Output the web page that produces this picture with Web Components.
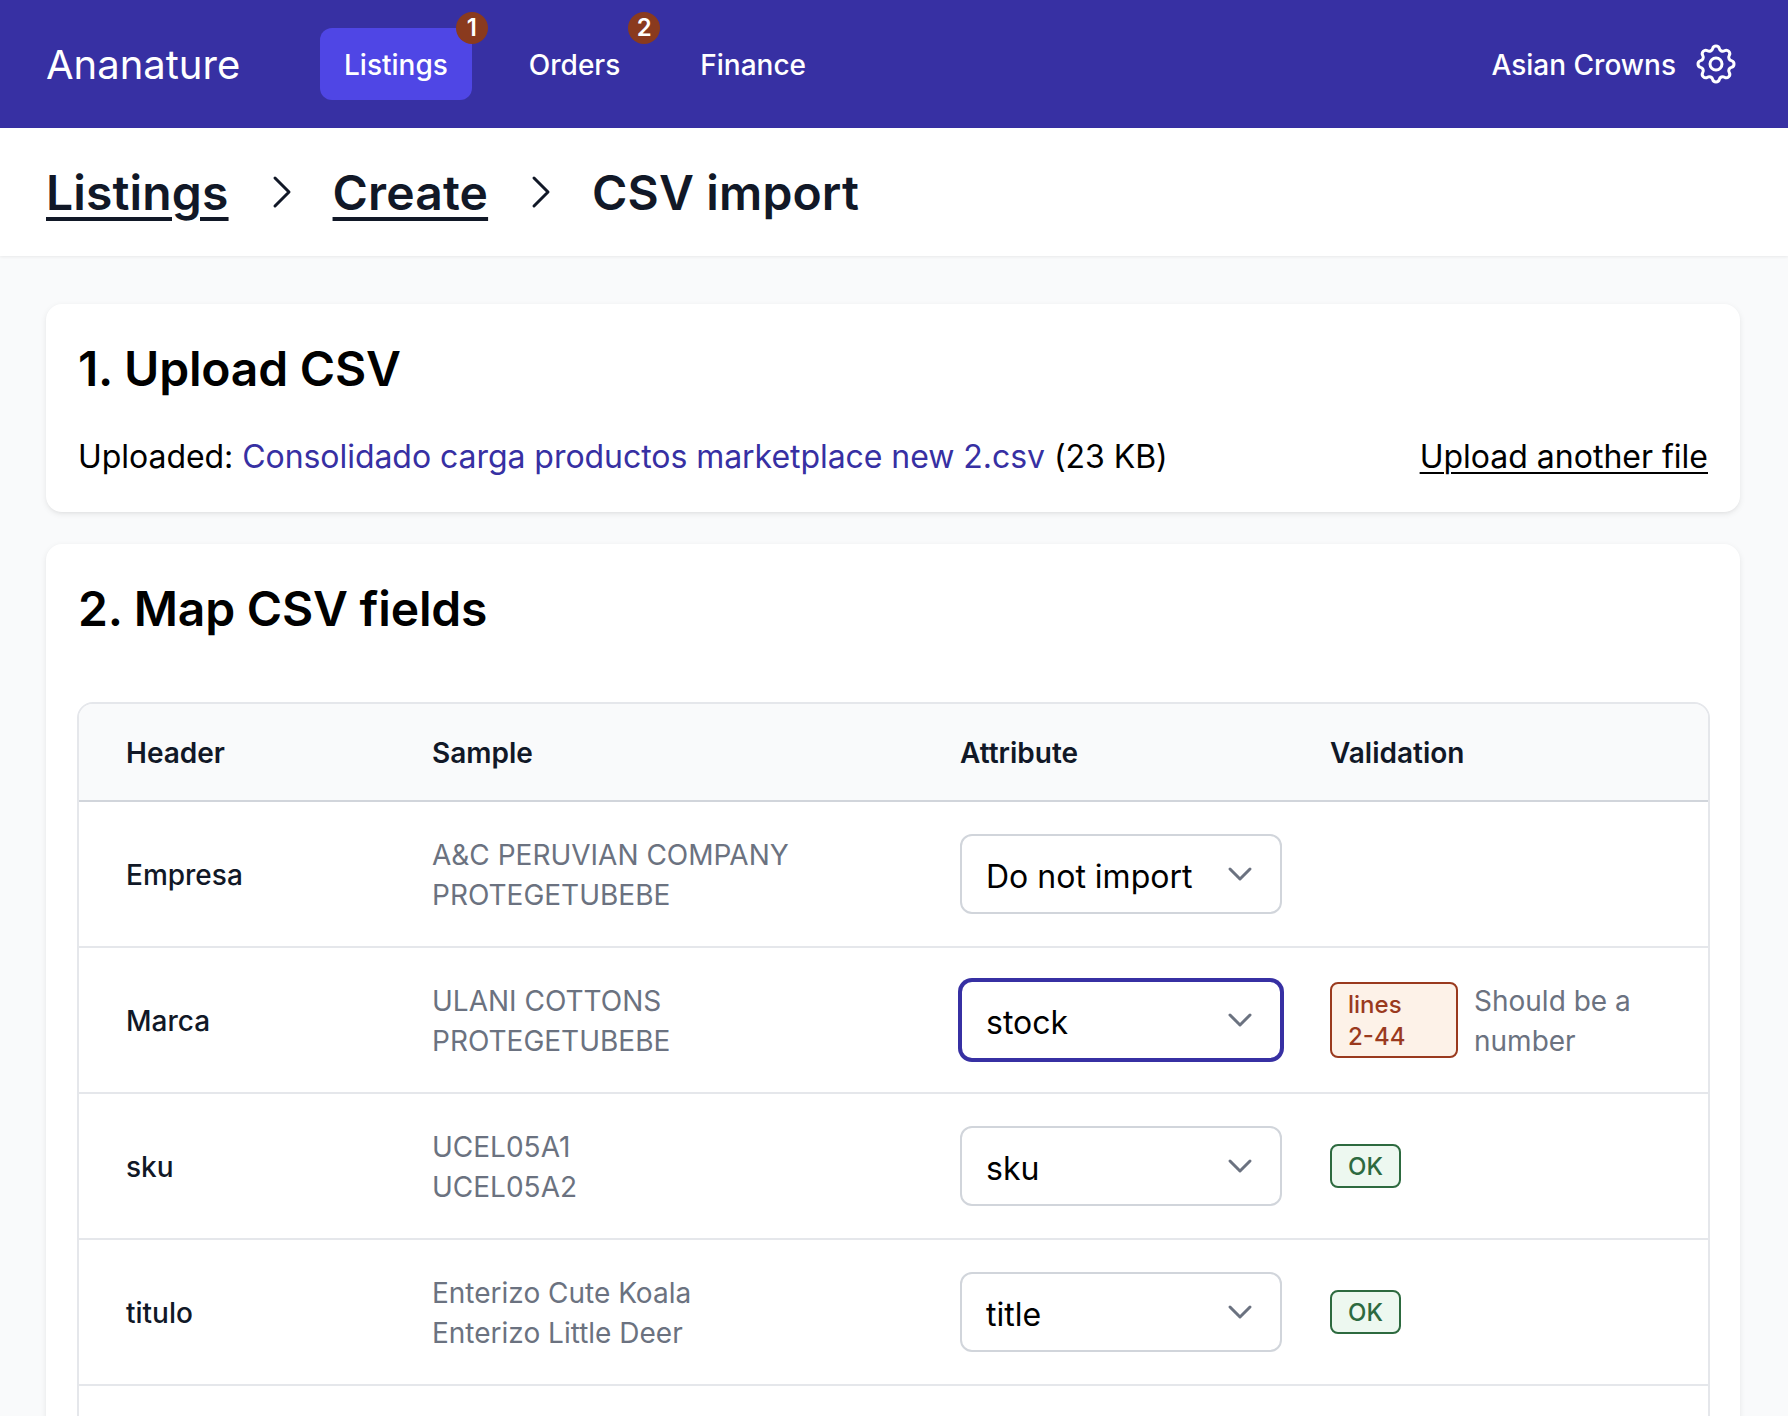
<!DOCTYPE html>
<html lang="en"><head><meta charset="utf-8"><title>CSV import</title>
<style>
html,body{margin:0;height:1416px;overflow:hidden;background:#f9fafb;font-family:Inter,"Noto Sans",sans-serif;color:#111827;-webkit-font-smoothing:antialiased}
main{display:flex;flex-direction:column;gap:32px;padding:48px 48px 0 46px}
</style></head><body>
<app-header brand="Ananature" account="Asian Crowns">
  <nav-tab active badge="1">Listings</nav-tab>
  <nav-tab badge="2" style="padding-left:25px">Orders</nav-tab>
  <nav-tab>Finance</nav-tab>
</app-header>
<page-crumbs>
  <crumb-link>Listings</crumb-link>
  <crumb-link>Create</crumb-link>
  <crumb-link current>CSV import</crumb-link>
</page-crumbs>
<main>
  <step-card heading="1. Upload CSV">
    <upload-line file="Consolidado carga productos marketplace new 2.csv" size="(23 KB)"></upload-line>
  </step-card>
  <step-card heading="2. Map CSV fields" gap>
    <map-table>
      <map-row header="Empresa" a="A&amp;C PERUVIAN COMPANY" b="PROTEGETUBEBE" value="Do not import"></map-row>
      <map-row header="Marca" a="ULANI COTTONS" b="PROTEGETUBEBE" value="stock" focus><status-badge tone="bad" wrap>lines<br>2-44</status-badge><val-note>Should be a number</val-note></map-row>
      <map-row header="sku" a="UCEL05A1" b="UCEL05A2" value="sku"><status-badge tone="ok">OK</status-badge></map-row>
      <map-row header="titulo" a="Enterizo Cute Koala" b="Enterizo Little Deer" value="title"><status-badge tone="ok">OK</status-badge></map-row>
      <map-row blank></map-row>
    </map-table>
  </step-card>
</main>
<script>
const def=(name,html,setup)=>customElements.define(name,class extends HTMLElement{
  constructor(){super();this.attachShadow({mode:'open'}).innerHTML=html;}
  connectedCallback(){setup&&setup.call(this,this.shadowRoot);}
});
const chevron='<path d="M6 9l6 6 6-6"/>';
const cols='329px 528px 370px 1fr';
def('app-header',`<style>
:host{display:flex;align-items:center;height:128px;background:#3730a3;color:#fff;padding:0 46px;box-sizing:border-box}
.brand{font-size:40px;line-height:48px;font-weight:400;width:274px;padding-top:2px}
.tabs{display:flex;gap:32px;flex:1}
.acct{display:flex;align-items:center;gap:16px;font-size:28px;line-height:40px;font-weight:500;margin-right:2px}
.acct span{padding-top:2px}
svg{width:48px;height:48px;display:block;fill:none;stroke:#fff;stroke-width:1.5;stroke-linecap:round;stroke-linejoin:round}
</style><div class="brand"></div><div class="tabs"><slot></slot></div><div class="acct"><span></span>
<svg viewBox="0 0 24 24"><path d="M10.325 4.317c.426-1.756 2.924-1.756 3.35 0a1.724 1.724 0 002.573 1.066c1.543-.94 3.31.826 2.37 2.37a1.724 1.724 0 001.065 2.572c1.756.426 1.756 2.924 0 3.35a1.724 1.724 0 00-1.066 2.573c.94 1.543-.826 3.31-2.37 2.37a1.724 1.724 0 00-2.572 1.065c-.426 1.756-2.924 1.756-3.35 0a1.724 1.724 0 00-2.573-1.066c-1.543.94-3.31-.826-2.37-2.37a1.724 1.724 0 00-1.065-2.572c-1.756-.426-1.756-2.924 0-3.35a1.724 1.724 0 001.066-2.573c-.94-1.543.826-3.31 2.37-2.37.996.608 2.296.07 2.572-1.065z"/><path d="M15 12a3 3 0 11-6 0 3 3 0 016 0z"/></svg></div>`,
function(r){r.querySelector('.brand').textContent=this.getAttribute('brand');r.querySelector('.acct span').textContent=this.getAttribute('account');});
def('nav-tab',`<style>
:host{display:block;position:relative;padding:17px 24px 15px;border-radius:12px;font-size:28px;line-height:40px;font-weight:500;color:#fff}
:host([active]){background:#4f46e5}
.b{position:absolute;top:-16px;right:-16px;width:32px;height:32px;border-radius:50%;background:#8a3a1e;color:#fff;font-size:24px;line-height:32px;font-weight:600;text-align:center}
</style><slot></slot>`,
function(r){const n=this.getAttribute('badge');if(n&&!r.querySelector('.b')){const d=document.createElement('div');d.className='b';d.textContent=n;r.appendChild(d);}});
def('page-crumbs',`<style>
:host{display:flex;align-items:center;height:128px;box-sizing:border-box;background:#fff;padding:0 46px;box-shadow:0 1px 3px rgba(0,0,0,.07);position:relative}
</style><slot></slot>`);
def('crumb-link',`<style>
:host{display:flex;align-items:center;font-size:48px;line-height:56px;font-weight:600;color:#111827;letter-spacing:.15px}
a{color:inherit;text-decoration:underline;text-decoration-thickness:4px;text-underline-offset:7px;padding-top:2px}
svg{width:48px;height:48px;margin:0 28px;fill:none;stroke:#111827;stroke-width:1.5;stroke-linecap:round;stroke-linejoin:round;display:block}
</style><a><slot></slot></a><svg viewBox="0 0 24 24"><path d="M9 5l7 7-7 7"/></svg>`,
function(r){if(this.hasAttribute('current')){r.querySelector('a').style.textDecoration='none';r.querySelector('svg').style.display='none';}});
def('step-card',`<style>
:host{display:block;background:#fff;border-radius:16px;padding:32px;box-shadow:0 2px 6px rgba(0,0,0,.08),0 2px 4px -2px rgba(0,0,0,.06);width:1630px}
:host([gap]) h2{margin-bottom:62px}
h2{margin:0 0 32px;height:64px;font-size:48px;line-height:66px;font-weight:600;color:#000;letter-spacing:-.2px}
</style><h2></h2><slot></slot>`,
function(r){r.querySelector('h2').textContent=this.getAttribute('heading');});
def('upload-line',`<style>
:host{display:flex;justify-content:space-between;height:48px;font-size:32px;line-height:50px;color:#000}
.l{letter-spacing:-.05px}
b{font-weight:400;color:#3730a3}
i{font-style:normal}
u{text-underline-offset:4px;text-decoration-thickness:2px}
</style><span class="l">Uploaded: <b></b> <i></i></span><u>Upload another file</u>`,
function(r){r.querySelector('b').textContent=this.getAttribute('file');r.querySelector('i').textContent=this.getAttribute('size');});
def('map-table',`<style>
:host{display:block;margin:0 -2px 0 -1px;border:2px solid #e5e7eb;border-radius:16px;overflow:hidden;background:#fff}
.h{display:grid;grid-template-columns:${cols};background:#f9fafb;border-bottom:2px solid #d1d5db;height:96px;align-items:center;font-size:28px;line-height:40px;font-weight:600;color:#111827}
.h div{padding:2px 24px 0}.h div:first-child{padding-left:47px}
</style><div class="h"><div>Header</div><div>Sample</div><div>Attribute</div><div>Validation</div></div><slot></slot>`);
def('map-row',`<style>
:host{display:grid;grid-template-columns:${cols};height:144px;border-bottom:2px solid #e5e7eb;align-items:center;font-size:28px;line-height:40px;color:#111827}
:host>div{padding:2px 24px 0}
:host>.f{padding:0 0 0 24px}
.a{padding-left:47px!important;font-weight:500}
.s{color:#6b7280}
:host>.v{display:flex;align-items:center;gap:16px;padding-top:0}
</style><div class="a"></div><div class="s"><div class="s1"></div><div class="s2"></div></div><div class="f"></div><div class="v"><slot></slot></div>`,
function(r){if(this.hasAttribute('blank'))return;
 r.querySelector('.a').textContent=this.getAttribute('header');
 r.querySelector('.s1').textContent=this.getAttribute('a');
 r.querySelector('.s2').textContent=this.getAttribute('b');
 const s=document.createElement('field-select');s.textContent=this.getAttribute('value');if(this.hasAttribute('focus'))s.setAttribute('focus','');r.querySelector('.f').appendChild(s);});
def('field-select',`<style>
:host{display:flex;align-items:center;justify-content:space-between;box-sizing:border-box;width:322px;height:80px;padding:0 20px 0 24px;border:2px solid #d1d5db;border-radius:12px;background:#fff;font-size:32px;line-height:48px;color:#000}
:host([focus]){border-color:#3730a3;box-shadow:0 0 0 2px #3730a3}
svg{width:40px;height:40px;fill:none;stroke:#6b7280;stroke-width:1.8;stroke-linecap:round;stroke-linejoin:round;flex:none}
span{padding-top:6px}
</style><span><slot></slot></span><svg viewBox="0 0 24 24">${chevron}</svg>`);
def('status-badge',`<style>
:host{display:inline-block;box-sizing:border-box;padding:5px 16px 3px;border:2px solid;border-radius:8px;font-size:24px;line-height:32px;font-weight:500;flex:none}
:host([tone=bad]){color:#9a3a1e;background:#fdf2e8;border-color:#9a3a1e}
:host([tone=ok]){color:#2d6a3f;background:#edf8f0;border-color:#2d6a3f}
:host([wrap]){width:128px}
</style><slot></slot>`);
def('val-note',`<style>:host{display:block;color:#6b7280;font-size:28px;line-height:40px;padding-top:2px}</style><slot></slot>`);
</script></body></html>
